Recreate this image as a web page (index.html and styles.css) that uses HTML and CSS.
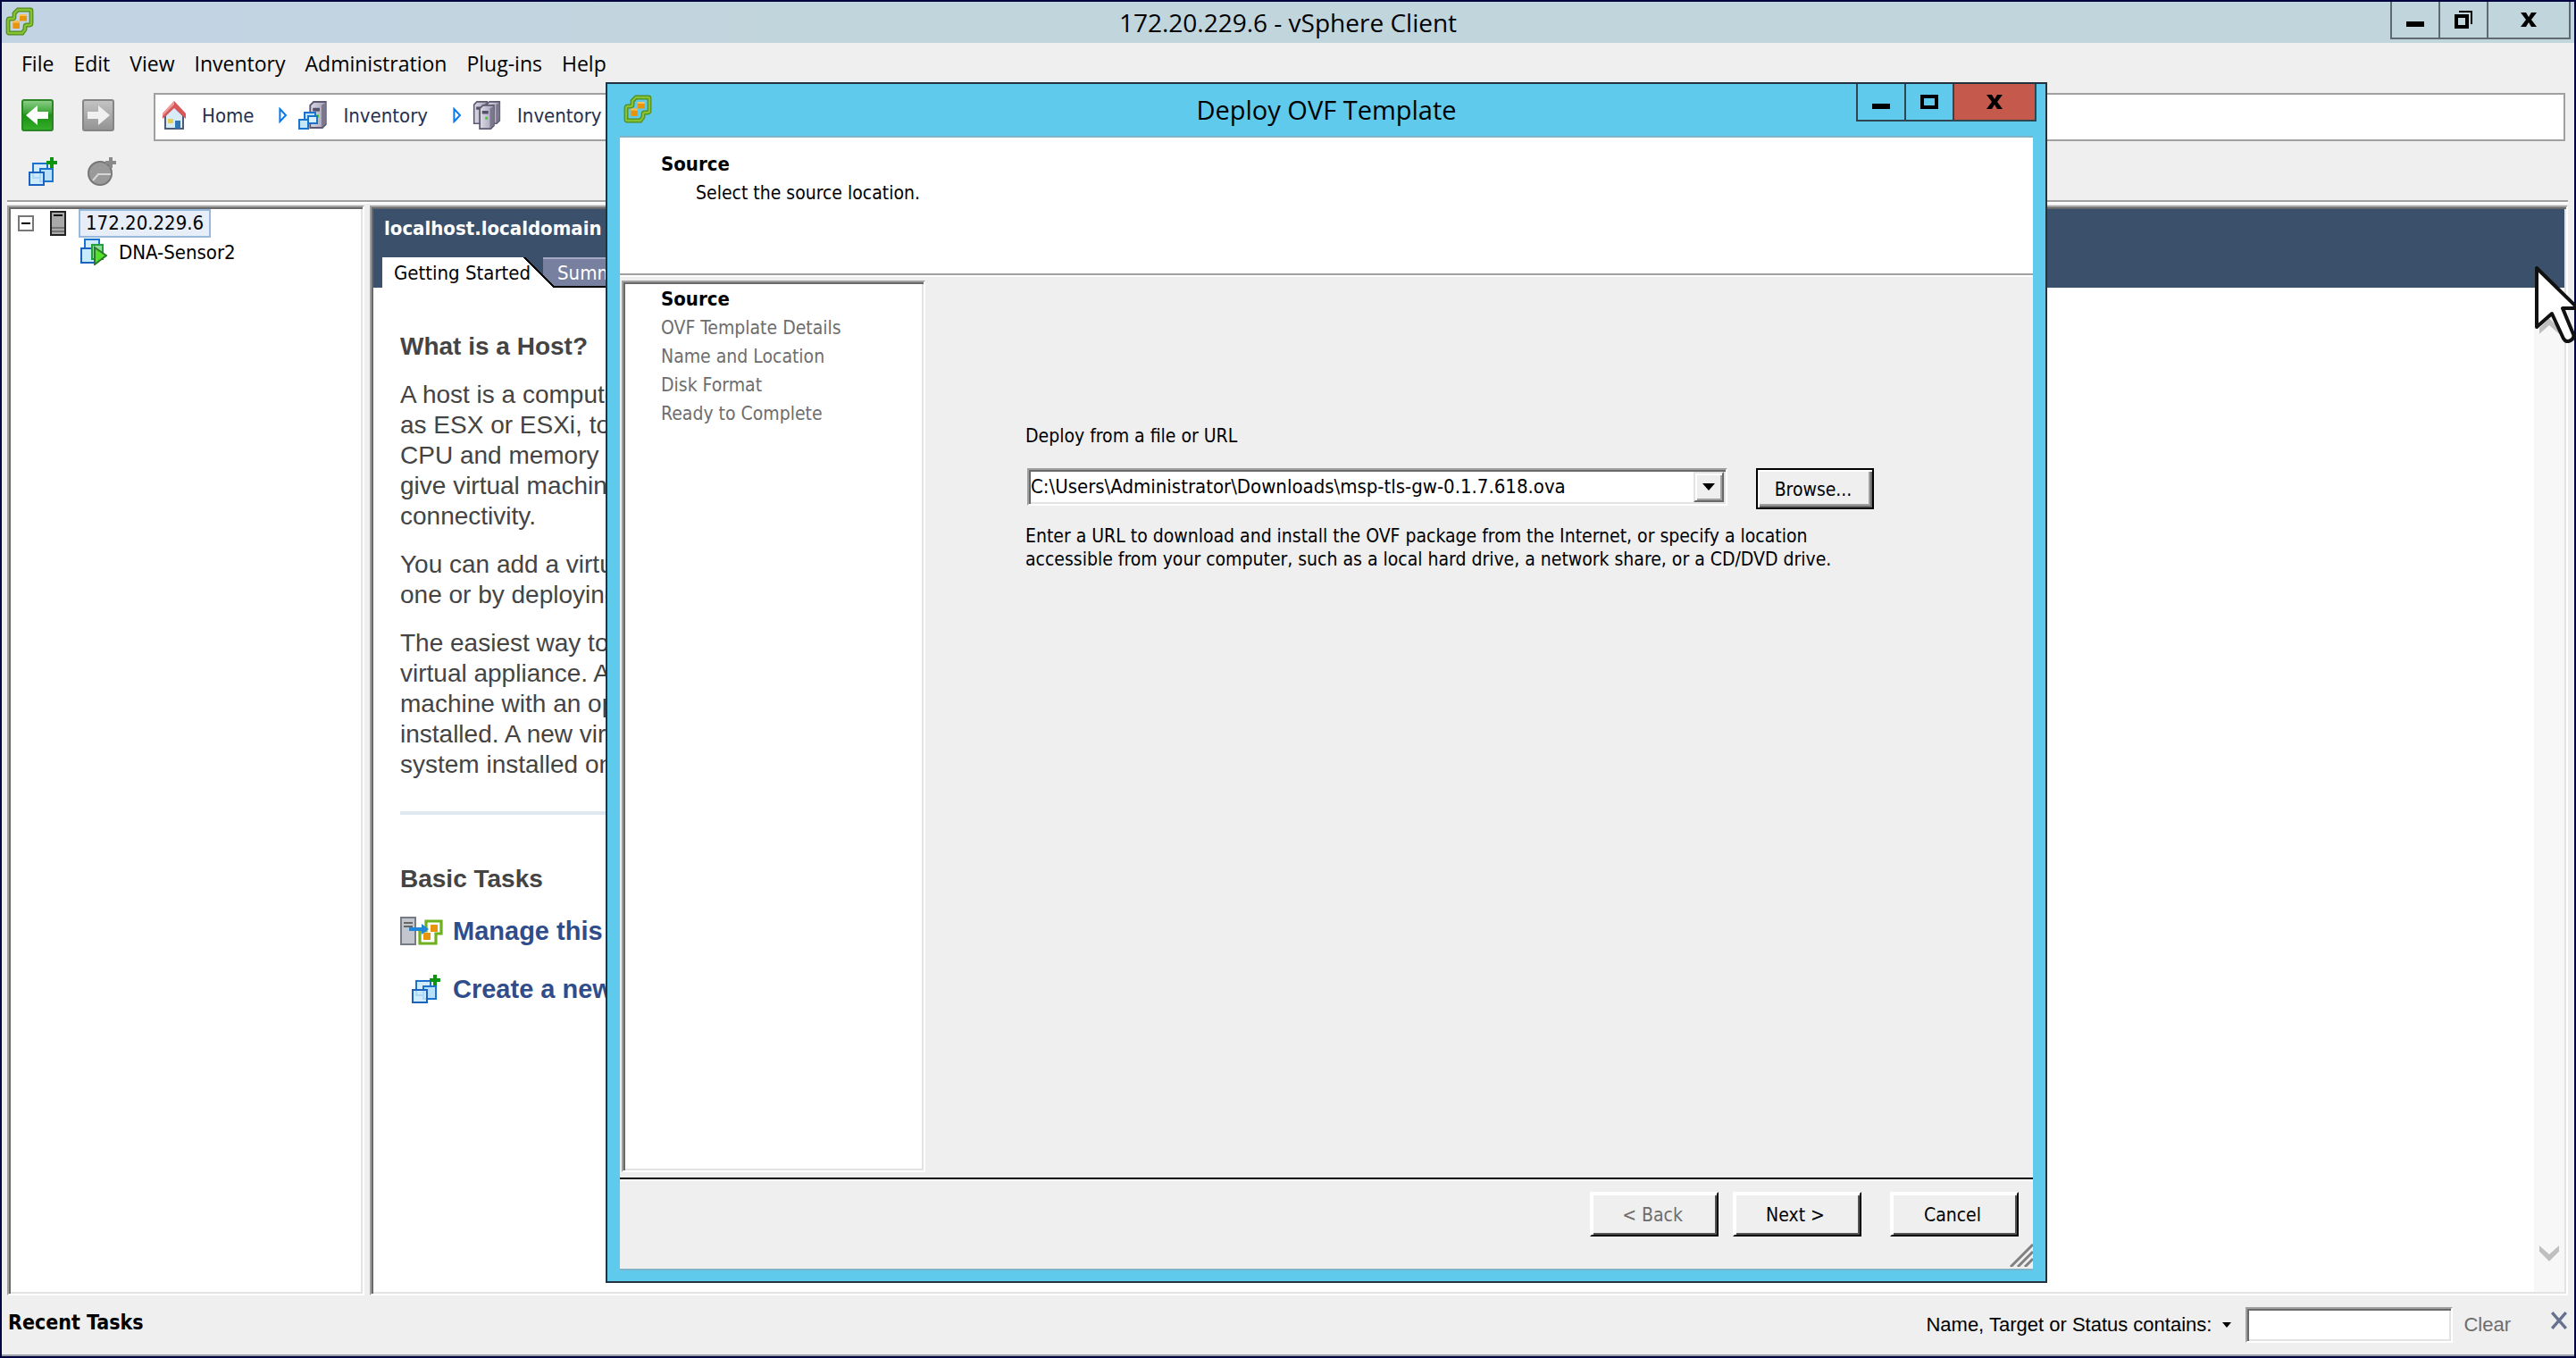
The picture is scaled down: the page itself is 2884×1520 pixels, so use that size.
FILE: index.html
```html
<!DOCTYPE html>
<html lang="en">
<head>
    <meta charset="UTF-8">
    <meta name="viewport" content="width=device-width, initial-scale=1.0">
    <title>172.20.229.6 - vSphere Client</title>
    <link rel="stylesheet" href="styles.css">
</head>
<body>
    <!-- Shared icons -->
    <svg class="sprite" aria-hidden="true">
        <linearGradient id="gGreen" x1="0" y1="0" x2="0" y2="1"><stop offset="0" stop-color="#8fd08a"/><stop offset="0.4" stop-color="#3fa63a"/><stop offset="0.5" stop-color="#1c8f14"/><stop offset="1" stop-color="#35b02b"/></linearGradient>
        <linearGradient id="gGray" x1="0" y1="0" x2="0" y2="1"><stop offset="0" stop-color="#c4c4c4"/><stop offset="1" stop-color="#929292"/></linearGradient>
        <linearGradient id="gServer" x1="0" y1="0" x2="1" y2="0"><stop offset="0" stop-color="#dcdbe6"/><stop offset="1" stop-color="#a3a0b4"/></linearGradient>
        <symbol id="logo" viewBox="0 0 16 16">
            <path d="M7 1.500h7q.500 0 .500.500v7q0 1-1 1H12q-1 0-1 1v1.500L9.500 14.500H2q-.500 0-.500-.500V7.500q0-1 1-1H4q1 0 1-1V3.500z" fill="none" stroke="#4f8a1d" stroke-width="2.400"/>
            <path d="M7 1.500h7q.500 0 .500.500v7q0 1-1 1H12q-1 0-1 1v1.500L9.500 14.500H2q-.500 0-.500-.500V7.500q0-1 1-1H4q1 0 1-1V3.500z" fill="none" stroke="#86c232" stroke-width="1.200"/>
            <path d="M8 4h4v3.800H8zM4.200 7.800H8V12H4.200z" fill="#e8950c"/>
            <path d="M8 4h4v1H8zM4.200 7.800H8v1H4.200z" fill="#fbc154"/>
        </symbol>
        <symbol id="vmAdd" viewBox="0 0 16 16">
            <path d="M2.500 3.500h8v8h-8z" fill="#d4ebfa" stroke="#1a73cf"/>
            <path d="M6.500 6.500h7v7h-7z" fill="#b9e0fa" stroke="#1a73cf"/>
            <path d="M.500 8.500h8v7h-8z" fill="#c8eafd" fill-opacity="0.850" stroke="#1a62bd"/>
            <path d="M12 0h2v2h2v2h-2v2h-2V4h-2V2h2z" fill="#0a9410"/>
        </symbol>
        <symbol id="poolAdd" viewBox="0 0 16 16">
            <circle cx="7" cy="9" r="6.500" fill="#9a9a9a" stroke="#777"/>
            <path d="M3 13l3-3.500h7" fill="none" stroke="#d6d6d6"/>
            <path d="M12 0h2v2h2v2h-2v2h-2V4h-2V2h2z" fill="#8a8a8a"/>
        </symbol>
        <symbol id="tower" viewBox="0 0 10 16">
            <path d="M2.500.500h7v13l-2 2h-7v-13z" fill="url(#gServer)" stroke="#5d5970"/>
            <path d="M7 2.500V15l2.500-2V1z" fill="#7b778c"/>
            <path d="M2 4h4v2H2z" fill="#55516a"/>
            <path d="M4 8h1.500v1.500H4z" fill="#35d01f"/>
        </symbol>
    </svg>

    <div class="app">
        <header class="titlebar">
            <svg class="logo"><use href="#logo"/></svg>
            <h1>172.20.229.6 - vSphere Client</h1>
            <div class="controls">
                <button aria-label="Minimize"><svg viewBox="0 0 20 20"><path d="M0 12h20v6H0z"/></svg></button>
                <button aria-label="Restore"><svg viewBox="0 0 20 20"><path d="M0 4h16v16H0zM4 8v8h8V8z" fill-rule="evenodd"/><path d="M5 1h14v14" fill="none" stroke="#000" stroke-width="2"/></svg></button>
                <button class="wide" aria-label="Close"><svg viewBox="0 0 20 20"><path d="M1 2h6l3 5 3-5h6l-6 8 6 8h-6l-3-5-3 5H1l6-8z"/></svg></button>
            </div>
        </header>

        <nav class="menubar">
            <button>File</button>
            <button>Edit</button>
            <button>View</button>
            <button>Inventory</button>
            <button>Administration</button>
            <button>Plug-ins</button>
            <button>Help</button>
        </nav>

        <div class="toolbar">
            <button class="nav" aria-label="Back"><svg viewBox="0 0 18 18"><rect x="0.500" y="0.500" width="17" height="17" rx="1" fill="url(#gGreen)" stroke="#2c8427"/><path d="M2.500 9L9 3.500V7h6v4H9v3.500z" fill="#fff"/></svg></button>
            <button class="nav" aria-label="Forward"><svg viewBox="0 0 18 18"><rect x="0.500" y="0.500" width="17" height="17" rx="1" fill="url(#gGray)" stroke="#858585"/><path d="M15.500 9L9 3.500V7H3v4h6v3.500z" fill="#f0f0f0"/></svg></button>
            <div class="address">
                <button class="crumb">
                    <svg class="home" viewBox="0 0 13 16"><path d="M1.500 8L6.500 3l5 5v7.500h-10z" fill="#d8ecf8" stroke="#4d5a78"/><path d="M6.500 0L13 7v3L6.500 4 0 10V7z" fill="#d9575a"/><path d="M6.500 0L0 7v1.500L6.500 2z" fill="#f09a98"/><path d="M7 11h3v4.500H7z" fill="#2f74b5"/><path d="M3 10h3v2.500H3z" fill="#e5cf55"/></svg>
                    Home
                </button>
                <svg class="sep" viewBox="0 0 5 9"><path d="M.700 1l3.300 3.500L.700 8z" fill="#fff" stroke="#0a78f0"/></svg>
                <button class="crumb">
                    <svg class="inv" viewBox="0 0 16 16"><g transform="translate(6 0)"><use href="#tower" width="10" height="15.500"/></g><path d="M3.500 6.500h6v6h-6z" fill="#b9e2fb" stroke="#1a73cf"/><path d="M5.500 8.500h5v4h-5z" fill="#d9f0fd" stroke="#1a73cf"/><path d="M.500 10.500h5v5h-5z" fill="#c4e9fd" stroke="#1a73cf"/></svg>
                    Inventory
                </button>
                <svg class="sep" viewBox="0 0 5 9"><path d="M.700 1l3.300 3.500L.700 8z" fill="#fff" stroke="#0a78f0"/></svg>
                <button class="crumb">
                    <svg class="inv" viewBox="0 0 16 16"><use href="#tower" width="9" height="13" x="0" y="0"/><use href="#tower" width="9" height="13" x="7" y="0"/><use href="#tower" width="10" height="14" x="3" y="2"/></svg>
                    Inventory
                </button>
            </div>
        </div>

        <div class="toolbar2">
            <button aria-label="Create a new virtual machine"><svg><use href="#vmAdd"/></svg></button>
            <button aria-label="Create a new resource pool" disabled><svg><use href="#poolAdd"/></svg></button>
        </div>

        <div class="panes">
            <aside class="tree sunken">
                <div class="node">
                    <button class="toggle" aria-label="Collapse"></button>
                    <svg class="host" viewBox="0 0 9 14"><path d="M.500.500h8v13h-8z" fill="#a9a9a9" stroke="#222"/><path d="M2 2.500h5" stroke="#111"/><path d="M1 9.500h7M1 11.500h7" stroke="#666" stroke-width="0.700"/></svg>
                    <span class="selected">172.20.229.6</span>
                </div>
                <div class="node child">
                    <svg class="vm" viewBox="0 0 15 15"><path d="M2.500.500h8v8h-8z" fill="#cfeafb" stroke="#1a73cf"/><path d="M.500 5.500h8v8h-8z" fill="#c5ebfd" stroke="#1a62bd"/><path d="M6.500 3.500h6v8h-6z" fill="#8fdc9c" stroke="#22a03c"/><path d="M8 5l6.500 4.500L8 14.500z" fill="#55e02c" stroke="#2a7a2a"/></svg>
                    <span>DNA-Sensor2</span>
                </div>
            </aside>

            <main class="content sunken">
                <div class="content-head">
                    <h2>localhost.localdomain</h2>
                    <div class="tabs">
                        <button class="tab active">Getting Started</button>
                        <button class="tab">Summary</button>
                    </div>
                </div>
                <div class="content-body">
                    <div class="article">
                        <h3>What is a Host?</h3>
                        <p>A host is a computer<br>
                        as ESX or ESXi, to<br>
                        CPU and memory<br>
                        give virtual machines<br>
                        connectivity.</p>
                        <p>You can add a virtual<br>
                        one or by deploying</p>
                        <p>The easiest way to<br>
                        virtual appliance. A<br>
                        machine with an open<br>
                        installed. A new virtual<br>
                        system installed on</p>
                        <hr>
                        <h3>Basic Tasks</h3>
                        <a class="task" href="#">
                            <svg class="manage" viewBox="0 0 24 16"><path d="M.500.500h8v15h-8z" fill="#c3c6cc" stroke="#777c84"/><path d="M2 3.500h5M2 5.500h5" stroke="#666"/><path d="M14.500 2.500h8.500v7h-3v5.500h-9V8h3.500z" fill="#fff" stroke="#6fb01f" stroke-width="1.600"/><path d="M17 4.500h4v4h-4zM13 9h4v4h-4z" fill="#e8950c"/><path d="M5 6h7V4l4 3-4 3V8H5z" fill="#2186d8"/></svg>
                            Manage this
                        </a>
                        <a class="task" href="#">
                            <svg class="create"><use href="#vmAdd"/></svg>
                            Create a new
                        </a>
                    </div>
                    <div class="scroll">
                        <svg viewBox="0 0 20 16"><path d="M0 16V10L10 0l10 10v6L10 7z" fill="#bfbfbf"/></svg>
                        <svg viewBox="0 0 20 16"><path d="M0 0v6l10 10L20 6V0L10 9z" fill="#bfbfbf"/></svg>
                    </div>
                </div>
            </main>
        </div>

        <footer class="statusbar">
            <h2>Recent Tasks</h2>
            <div class="filter">
                <label for="filter">Name, Target or Status contains:</label>
                <button class="caret" aria-label="Choose column"><svg viewBox="0 0 10 6"><path d="M0 0h10L5 6z"/></svg></button>
                <input type="text" id="filter" class="sunken">
                <button class="clear">Clear</button>
                <button class="close" aria-label="Close pane"><svg viewBox="0 0 18 18"><path d="M2 1l14 16M16 1L2 17" stroke="#66708f" stroke-width="3"/></svg></button>
            </div>
        </footer>
    </div>

    <div class="dialog" role="dialog" aria-labelledby="dlgTitle">
        <header class="titlebar">
            <svg class="logo"><use href="#logo"/></svg>
            <h1 id="dlgTitle">Deploy OVF Template</h1>
            <div class="controls">
                <button aria-label="Minimize"><svg viewBox="0 0 20 20"><path d="M0 12h20v6H0z"/></svg></button>
                <button aria-label="Maximize"><svg viewBox="0 0 20 20"><path d="M0 2h20v16H0zM4 6v8h12V6z" fill-rule="evenodd"/></svg></button>
                <button class="wide" aria-label="Close"><svg viewBox="0 0 20 20"><path d="M1 2h6l3 5 3-5h6l-6 8 6 8h-6l-3-5-3 5H1l6-8z"/></svg></button>
            </div>
        </header>

        <div class="wizard">
            <div class="intro">
                <h2>Source</h2>
                <p>Select the source location.</p>
            </div>
            <div class="wizard-body">
                <ol class="steps sunken">
                    <li class="current">Source</li>
                    <li>OVF Template Details</li>
                    <li>Name and Location</li>
                    <li>Disk Format</li>
                    <li>Ready to Complete</li>
                </ol>
                <form class="source">
                    <label for="path">Deploy from a file or URL</label>
                    <div class="row">
                        <div class="combo sunken">
                            <select id="path">
                                <option>C:\Users\Administrator\Downloads\msp-tls-gw-0.1.7.618.ova</option>
                            </select>
                            <span class="drop"><svg viewBox="0 0 14 8"><path d="M0 0h14L7 8z"/></svg></span>
                        </div>
                        <button type="button" class="browse">Browse...</button>
                    </div>
                    <p>Enter a URL to download and install the OVF package from the Internet, or specify a location<br>
                    accessible from your computer, such as a local hard drive, a network share, or a CD/DVD drive.</p>
                </form>
            </div>
            <div class="actions">
                <button class="btn" disabled>&lt; Back</button>
                <button class="btn">Next &gt;</button>
                <button class="btn cancel">Cancel</button>
                <svg class="grip" viewBox="0 0 26 26"><path d="M1 26L26 1M9 26L26 9M17 26l9-9" stroke="#808080" stroke-width="3"/></svg>
            </div>
        </div>
    </div>

    <!-- Mouse pointer -->
    <svg class="pointer" viewBox="0 0 46 86"><path d="M2 2v66l17-15 13 28q3 5 8 2 5-3 3-7L31 47h17z" fill="#fff" stroke="#111" stroke-width="4" stroke-linejoin="round"/></svg>
</body>
</html>
```
FILE: styles.css
```css
* {
    box-sizing: border-box;
}
body {
    margin: 0;
    position: relative;
    overflow: hidden;
    font-family: "DejaVu Sans Condensed", "DejaVu Sans", sans-serif;
    font-size: 22px;
    color: #000;
    background-color: #efefef;
}
h1, h2, h3, p, ol {
    margin: 0;
    padding: 0;
}
button {
    padding: 0;
    border: none;
    background: none;
    font: inherit;
    color: inherit;
}
svg {
    display: block;
    flex: none;
}
.sprite {
    position: absolute;
    width: 0;
    height: 0;
}
.sunken {
    border: 2px solid;
    border-color: #a0a0a0 #fff #fff #a0a0a0;
    box-shadow: inset 2px 2px #696969, inset -2px -2px #e3e3e3;
    background-color: #fff;
}

/* Main window */
.app {
    display: flex;
    flex-direction: column;
    min-height: 100vh;
    border: 2px solid #020540;
}
.titlebar {
    display: grid;
    grid-template-columns: 1fr auto 1fr;
    align-items: start;
    height: 46px;
    padding: 0 4px;
    background: linear-gradient(to right, #c2d3e4, #c1d5dd 30%);
}
.titlebar h1 {
    font: 28px/46px "Open Sans", sans-serif;
}
.logo {
    width: 32px;
    height: 32px;
    margin-top: 6px;
}
.controls {
    display: flex;
    justify-self: end;
    border: 2px solid #5f6a70;
    border-top: none;
}
.controls button {
    display: grid;
    place-items: center;
    width: 54px;
    height: 40px;
    border-right: 2px solid #5f6a70;
}
.controls .wide {
    width: 90px;
    border-right: none;
}
.controls svg {
    width: 20px;
    height: 20px;
}
.menubar {
    display: flex;
    gap: 22px;
    height: 46px;
    margin-bottom: 2px;
    padding: 0 22px;
    font: 23px/46px "Open Sans", sans-serif;
}
.toolbar {
    display: flex;
    align-items: center;
    gap: 32px;
    padding: 8px 10px 0 22px;
}
.nav {
    margin-bottom: 4px;
}
.nav svg {
    width: 36px;
    height: 36px;
}
.address {
    display: flex;
    flex: 1;
    align-items: center;
    height: 54px;
    margin-left: 12px;
    padding: 0 0 4px 8px;
    border: 2px solid #a0a0a0;
    background-color: #fff;
}
.crumb {
    display: flex;
    align-items: center;
    gap: 18px;
    color: #26304f;
}
.home {
    width: 26px;
    height: 32px;
}
.inv {
    width: 32px;
    height: 32px;
}
.sep {
    width: 10px;
    height: 18px;
    margin: 0 12px 0 28px;
}
.toolbar2 {
    display: flex;
    align-items: center;
    gap: 34px;
    height: 66px;
    padding: 2px 0 0 30px;
}
.toolbar2 svg {
    width: 32px;
    height: 32px;
}
.panes {
    display: flex;
    flex: 1;
    gap: 6px;
    margin-left: 6px;
    margin-right: 7px;
    border-top: 2px solid #a0a0a0;
    padding-top: 4px;
    background: linear-gradient(#fff 2px, transparent 2px);
}

/* Inventory tree */
.tree {
    width: 400px;
    padding: 2px 8px;
}
.node {
    display: flex;
    align-items: center;
    height: 32px;
}
.child {
    padding-left: 72px;
    gap: 13px;
}
.toggle {
    width: 18px;
    height: 18px;
    margin: 0 18px 0 2px;
    border: 2px solid #777;
    background: linear-gradient(#000, #000) center / 10px 2px no-repeat;
}
.host {
    width: 18px;
    height: 28px;
    margin-right: 14px;
}
.vm {
    width: 30px;
    height: 30px;
}
.selected {
    padding: 0 6px;
    border: 2px solid #99b9dc;
    background-color: #e8eef8;
    line-height: 28px;
}

/* Content pane */
.content {
    display: flex;
    flex: 1;
    flex-direction: column;
    min-width: 0;
    padding: 2px;
}
.content-head {
    padding-left: 10px;
    background-color: #3a506b;
}
.content-head h2 {
    padding: 0 2px;
    font-size: 22px;
    line-height: 44px;
    height: 54px;
    color: #fff;
}
.tabs {
    display: flex;
}
.tab {
    height: 34px;
    padding: 0 16px;
    margin-left: -14px;
    border-top: 2px solid #a3a9c2;
    border-bottom: 2px solid #000;
    background-color: #77809f;
    color: #fff;
}
.tab.active {
    position: relative;
    z-index: 1;
    margin-left: 0;
    padding: 0 28px 0 13px;
    border: none;
    background: linear-gradient(225deg, transparent 24px, #000 24px, #000 26px, #fff 26px);
    color: #000;
}
.content-body {
    display: flex;
    flex: 1;
    justify-content: space-between;
}
.article {
    padding: 49px 30px;
    font: 28px/34px "Liberation Sans", Arial, sans-serif;
    color: #444;
    white-space: nowrap;
}
.article h3 {
    font-size: 28px;
}
.article p {
    margin-top: 20px;
}
.article hr {
    height: 4px;
    margin: 35px 0 55px;
    border: none;
    background-color: #dfe7f1;
}
.task {
    display: grid;
    grid-template-columns: 48px auto;
    gap: 11px;
    align-items: center;
    height: 65px;
    font-size: 29px;
    font-weight: bold;
    color: #2f4d8a;
    text-decoration: none;
}
h3 + .task {
    margin-top: 8px;
}
.manage {
    width: 48px;
    height: 32px;
}
.create {
    width: 32px;
    height: 32px;
    margin-left: 13px;
}
.scroll {
    display: flex;
    flex-direction: column;
    justify-content: space-between;
    align-items: center;
    width: 34px;
    padding: 34px 0;
    background-color: #f7f7f7;
}
.scroll svg {
    width: 22px;
    height: 18px;
}

/* Recent tasks bar */
.statusbar {
    display: flex;
    align-items: center;
    justify-content: space-between;
    height: 68px;
    padding: 0 7px;
    border-bottom: 2px solid #999ea8;
}
.statusbar h2 {
    font-size: 23px;
    line-height: 60px;
    height: 66px;
}
.filter {
    display: flex;
    align-items: center;
    font: 22px "Liberation Sans", Arial, sans-serif;
}
.caret {
    margin: 0 16px 0 12px;
}
.caret svg {
    width: 10px;
    height: 6px;
}
.filter input {
    width: 232px;
    height: 40px;
    padding: 0 6px;
    font: inherit;
}
.clear {
    margin: 0 44px 0 12px;
    color: #6d6d6d;
}
.close {
    margin-bottom: 10px;
}
.close svg {
    width: 20px;
    height: 20px;
}

/* Deploy OVF Template window */
.dialog {
    position: absolute;
    top: 92px;
    left: 678px;
    display: flex;
    flex-direction: column;
    width: 1614px;
    height: 1344px;
    padding-bottom: 12px;
    border: 2px solid #22333f;
    background-color: #5fcaeb;
}
.dialog .titlebar {
    height: 58px;
    padding: 0 10px;
    background: none;
}
.dialog .titlebar h1 {
    font-size: 29px;
    line-height: 58px;
}
.dialog .logo {
    margin: 12px 0 0 8px;
}
.dialog .controls, .dialog .controls button {
    border-color: #2e4650;
}
.dialog .controls .wide {
    background-color: #c5594c;
}
.wizard {
    display: flex;
    flex: 1;
    flex-direction: column;
    margin: 0 14px;
    border-top: 2px solid #7fb3c8;
    border-bottom: 2px solid #7fb3c8;
    background-color: #efefef;
    font-size: 21px;
}
.intro {
    height: 154px;
    padding: 14px 46px;
    border-bottom: 2px solid #a0a0a0;
    background-color: #fff;
    line-height: 32px;
}
.intro h2 {
    font-size: 22px;
}
.intro p {
    padding-left: 39px;
}
.wizard-body {
    display: flex;
    flex: 1;
    padding: 6px 2px;
    background: linear-gradient(#fff 2px, transparent 2px);
}
.steps {
    width: 340px;
    padding: 3px 42px;
    list-style: none;
    line-height: 32px;
    color: #6d6d6d;
}
.steps .current {
    font-size: 22px;
    font-weight: bold;
    color: #000;
}
.source {
    flex: 1;
    padding: 161px 112px 0;
    line-height: 26px;
}
.source label {
    display: block;
}
.row {
    display: flex;
    align-items: flex-start;
    gap: 32px;
    margin: 23px 0 17px 2px;
}
.combo {
    display: grid;
    grid-template-columns: 1fr 34px;
    width: 784px;
    height: 42px;
    padding: 2px;
}
.combo select {
    grid-area: 1 / 1 / 2 / 3;
    padding: 0;
    border: none;
    background: none;
    font: inherit;
    font-size: 22px;
    color: #000;
    appearance: none;
}
.drop {
    grid-area: 1 / 2;
    display: grid;
    place-items: center;
    border: 2px solid;
    border-color: #e3e3e3 #696969 #696969 #e3e3e3;
    box-shadow: inset 2px 2px #fff, inset -2px -2px #a0a0a0;
    background-color: #efefef;
    pointer-events: none;
}
.drop svg {
    width: 14px;
    height: 8px;
}
.browse {
    width: 132px;
    height: 46px;
    border: 2px solid #000;
    padding: 2px 4px 0 0;
    box-shadow: inset 2px 2px #fff, inset -2px -2px #696969, inset -4px -4px #a0a0a0;
}
.actions {
    display: flex;
    gap: 16px;
    justify-content: flex-end;
    height: 102px;
    padding: 14px 16px;
    border-top: 2px solid #000;
    box-shadow: inset 0 2px #fff;
    position: relative;
}
.btn {
    width: 144px;
    height: 50px;
    border: 2px solid;
    border-color: #fff #000 #000 #fff;
    padding: 2px 4px 0 0;
    box-shadow: inset 2px 2px #fff, inset -2px -2px #555;
}
.btn:disabled {
    color: #6d6d6d;
}
.cancel {
    margin-left: 16px;
}
.grip {
    position: absolute;
    right: 0;
    bottom: 2px;
    width: 26px;
    height: 26px;
}

.pointer {
    position: absolute;
    top: 298px;
    right: 0;
    width: 46px;
    height: 86px;
}
```
